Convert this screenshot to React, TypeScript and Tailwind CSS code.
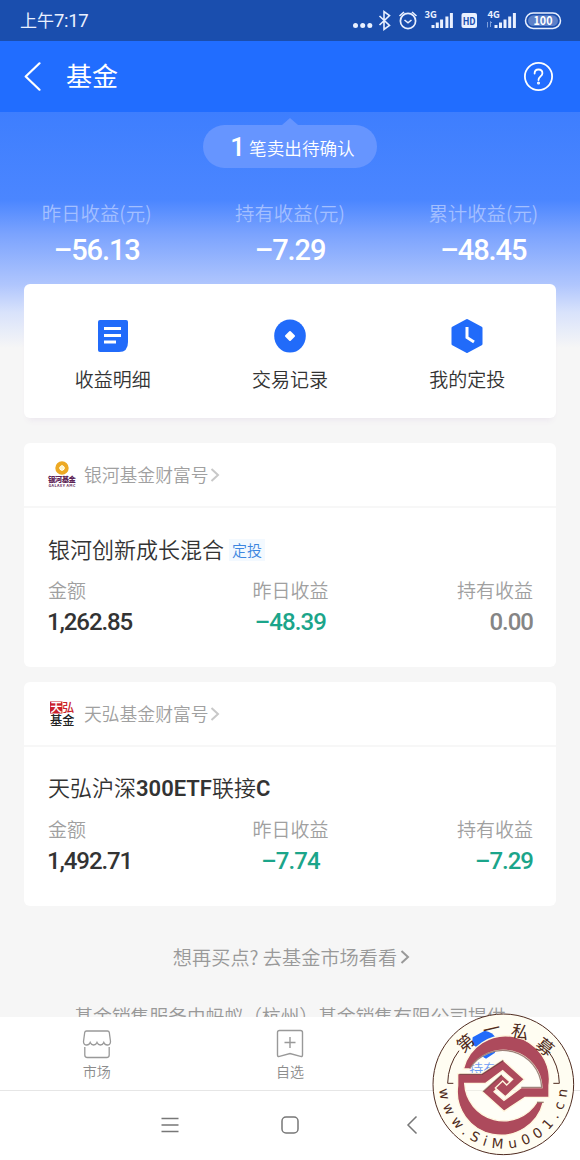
import React from "react";

type Fund = {
  company: string;
  logo: React.ReactNode;
  name: React.ReactNode;
  tag?: string;
  amount: string;
  yesterday: string;
  holding: string;
};

const GalaxyLogo = () => (
  <svg className="overflow-visible" width="28" height="28" viewBox="0 0 28 28">
    <circle cx="14" cy="7" r="4.600" fill="none" stroke="#eda923" strokeWidth="4.200" />
    <path d="M14 4v6M11 7h6" stroke="#fff3c4" strokeWidth="1.600" />
    <text x="0" y="21" textLength="28" fontSize="7.400" fontWeight="900" fill="#5d2456">
      银河基金
    </text>
    <text x="0.500" y="26.300" textLength="27" fontSize="3.800" fontWeight="700" fill="#5d2456">
      GALAXY AMC
    </text>
  </svg>
);

const TianhongLogo = () => (
  <svg className="overflow-visible" width="28" height="28" viewBox="0 0 28 28">
    <rect x="2" y="1.500" width="12.400" height="12" fill="#c91f2c" />
    <text x="2.200" y="12" fontSize="12" fontWeight="500" fill="#fff">
      天
    </text>
    <text x="14.200" y="12" fontSize="12" fontWeight="500" fill="#c91f2c">
      弘
    </text>
    <text x="2" y="25" fontSize="12.200" fontWeight="500" fill="#222">
      基金
    </text>
  </svg>
);

const funds: Fund[] = [
  {
    company: "银河基金财富号",
    logo: <GalaxyLogo />,
    name: "银河创新成长混合",
    tag: "定投",
    amount: "1,262.85",
    yesterday: "–48.39",
    holding: "0.00",
  },
  {
    company: "天弘基金财富号",
    logo: <TianhongLogo />,
    name: (
      <>
        天弘沪深<b className="font-[Roboto] font-semibold">300ETF</b>联接
        <b className="font-[Roboto] font-semibold">C</b>
      </>
    ),
    amount: "1,492.71",
    yesterday: "–7.74",
    holding: "–7.29",
  },
];

const stats = [
  { label: "昨日收益(元)", value: "–56.13" },
  { label: "持有收益(元)", value: "–7.29" },
  { label: "累计收益(元)", value: "–48.45" },
];

const Chevron = ({ color }: { color: string }) => (
  <svg width="10" height="16" viewBox="0 0 10 16" fill="none">
    <path d="M1.500 2L8 8l-6.500 6" stroke={color} strokeWidth="2" />
  </svg>
);

const StatusBar = () => (
  <div className="flex h-[41px] shrink-0 items-center justify-between bg-[#1a4eae] pl-5 text-[17px] text-[#e9f0ff]">
    <span className="mt-[2px]">
      上午<span className="font-[Roboto] text-[18.500px] tracking-[-0.300px]">7:17</span>
    </span>
    <svg width="240" height="41" viewBox="0 0 240 41" fill="none" stroke="#e9f0ff">
      <g fill="#e9f0ff" stroke="none">
        <circle cx="15.500" cy="25.500" r="2.500" />
        <circle cx="22.700" cy="25.500" r="2.500" />
        <circle cx="29.800" cy="25.500" r="2.500" />
      </g>
      <path d="M39.500 16l10 9.500-5.500 4v-18l5.500 4-10 9.500" strokeWidth="1.600" />
      <circle cx="68" cy="21" r="7.600" strokeWidth="1.700" />
      <path d="M64.500 20l3.500 2.800 3.500-2.800M59.500 16l4.500-4M76.500 16l-4.500-4" strokeWidth="1.600" />
      <g fill="#e9f0ff" stroke="none" fontWeight="700" fontSize="9.500">
        <text x="84.500" y="18">3G</text>
        <text x="147.500" y="18">4G</text>
      </g>
      <path
        d="M93 28v-3M97.300 28v-5.500M101.600 28v-8.500M106.900 28v-11.500M111.400 28v-15M156 28v-3M160.500 28v-5.500M165 28v-8.500M169.700 28v-11.500M174.400 28v-15"
        strokeWidth="3"
      />
      <path d="M147.500 22v5.500M150.500 27v-5.500l1.500 1.500" stroke="#7fa0dc" />
      <rect x="121.500" y="13" width="15.500" height="15" rx="2" fill="#e9f0ff" stroke="none" />
      <text x="122.700" y="24.500" fontSize="10" fontWeight="700" textLength="13" lengthAdjust="spacingAndGlyphs" fill="#1a4eae" stroke="none">
        HD
      </text>
      <rect x="185.500" y="13" width="35" height="15.400" rx="7.700" strokeWidth="1.500" />
      <rect x="188" y="15.300" width="30" height="10.800" rx="5.400" fill="#5c80c8" stroke="none" />
      <text x="193.500" y="25" fontSize="12" fontWeight="700" textLength="19" lengthAdjust="spacingAndGlyphs" fill="#fff" stroke="none">
        100
      </text>
    </svg>
  </div>
);

const Header = () => (
  <div className="flex h-[71px] shrink-0 items-center bg-[#216dff] px-6 text-white">
    <svg width="18" height="30" viewBox="0 0 18 30" fill="none">
      <path d="M15.500 1.300L1.700 14.500l13.800 13.200" stroke="#fff" strokeWidth="2.200" strokeLinecap="round" strokeLinejoin="round" />
    </svg>
    <h1 className="-mt-[4px] ml-6 text-[26px] leading-none">基金</h1>
    <svg className="mr-[2px] ml-auto" width="31" height="31" viewBox="0 0 31 31" fill="none" stroke="#fff" strokeWidth="1.800">
      <circle cx="15.500" cy="15.500" r="13.600" />
      <path d="M11.600 12.500c0-2.500 1.700-4 3.900-4s3.900 1.500 3.900 3.700c0 3.200-3.900 3.200-3.900 6.800" strokeLinecap="round" />
      <circle cx="15.500" cy="22" r="0.600" />
    </svg>
  </div>
);

const Summary = () => (
  <div className="flex h-[172px] flex-col items-center pt-[6px] text-white">
    <svg width="16" height="7" viewBox="0 0 16 7">
      <path d="M0 7L8 0l8 7z" fill="#6695ff" />
    </svg>
    <div className="flex h-[43px] w-[174px] items-center justify-center rounded-full bg-[#6695ff] pl-[5px]">
      <span className="font-[Roboto] text-[26px] leading-none font-medium">1</span>
      <span className="mt-[3px] ml-1 text-[17.600px] leading-[26px] font-[350]">笔卖出待确认</span>
    </div>
    <div className="mt-[31px] grid w-full grid-cols-3">
      {stats.map((s) => (
        <div key={s.label} className="flex flex-col items-center">
          <span className="text-[19.400px] leading-[28px] font-[350] text-[#a3bfff]">{s.label}</span>
          <span className="mt-[5px] font-[Roboto] text-[29px] leading-[36px] font-medium tracking-[-1.100px]">
            {s.value}
          </span>
        </div>
      ))}
    </div>
  </div>
);

const Actions = () => (
  <div className="mx-6 grid h-[134px] grid-cols-3 rounded-md bg-white pt-[34px] text-[19px] text-[#333] shadow-[0_6px_6px_-4px_#ebe6ee]">
    <div className="flex flex-col items-center gap-[9px]">
      <svg width="36" height="36" viewBox="0 0 36 36">
        <path d="M5 2h26a2 2 0 0 1 2 2v20q0 10-9 10H5a2 2 0 0 1-2-2V4a2 2 0 0 1 2-2z" fill="#216bfa" />
        <path d="M9 10.500h17M9 17.500h17M9 24h12" stroke="#fff" strokeWidth="2.800" />
      </svg>
      <span className="leading-[32px] font-[350]">收益明细</span>
    </div>
    <div className="flex flex-col items-center gap-[9px]">
      <svg width="36" height="36" viewBox="0 0 36 36">
        <ellipse cx="18" cy="18" rx="15.800" ry="16.500" fill="#216bfa" />
        <path d="M18 14l4 4-4 4-4-4z" fill="#fff" stroke="#fff" strokeWidth="2" strokeLinejoin="round" />
      </svg>
      <span className="leading-[32px] font-[350]">交易记录</span>
    </div>
    <div className="flex flex-col items-center gap-[9px]">
      <svg width="36" height="36" viewBox="0 0 36 36">
        <path d="M18 2.500l14 7.500v16l-14 7.500-14-7.500V10z" fill="#216bfa" stroke="#216bfa" strokeWidth="3" strokeLinejoin="round" />
        <path d="M18 9v10.500l7 4.500" fill="none" stroke="#fff" strokeWidth="3" />
      </svg>
      <span className="leading-[32px] font-[350]">我的定投</span>
    </div>
  </div>
);

const valueColor = (v: string) => (v.startsWith("–") ? "text-[#1ba58a]" : "text-[#858585]");

const FundCard = ({ fund }: { fund: Fund }) => (
  <div className="mx-6 h-[224px] rounded-md bg-white">
    <div className="flex h-[65px] items-center border-b-2 border-[#f7f7f7] px-6">
      {fund.logo}
      <span className="ml-[8px] text-[17.800px] font-[350] text-[#a0a0a0]">{fund.company}</span>
      <span className="ml-[2px]">
        <Chevron color="#c8c8c8" />
      </span>
    </div>
    <div className="px-6 pt-[24px]">
      <div className="flex h-[32px] items-center text-[22px] leading-[32px] text-[#333]">
        <span className="font-[350]">{fund.name}</span>
        {fund.tag && (
          <span className="mt-[3px] ml-[5px] bg-[#f3f9ff] px-[3px] text-[15px] leading-[22px] font-[350] text-[#3d86e0]">
            {fund.tag}
          </span>
        )}
      </div>
      <div className="mt-[12px] flex justify-between text-[19px] leading-[28px] font-[350] text-[#a0a0a0]">
        <div className="w-[128px]">
          <div>金额</div>
          <div className="mt-[2px] -ml-px font-[Roboto] text-[24px] leading-[32px] font-medium tracking-[-1.100px] text-[#333]">
            {fund.amount}
          </div>
        </div>
        <div className="text-center">
          <div>昨日收益</div>
          <div className={`mt-[2px] font-[Roboto] text-[24px] leading-[32px] font-medium tracking-[-0.900px] ${valueColor(fund.yesterday)}`}>
            {fund.yesterday}
          </div>
        </div>
        <div className="-mr-px w-[128px] text-right">
          <div>持有收益</div>
          <div className={`mt-[2px] font-[Roboto] text-[24px] leading-[32px] font-medium tracking-[-1px] ${valueColor(fund.holding)}`}>
            {fund.holding}
          </div>
        </div>
      </div>
    </div>
  </div>
);

const TabBar = () => (
  <div className="grid h-[73px] shrink-0 grid-cols-3 bg-white text-[14px] font-[350] text-[#8c8c8c]">
    <div className="flex flex-col items-center pt-[12px]">
      <svg width="30" height="30" viewBox="0 0 30 30" fill="none" stroke="#999" strokeWidth="1.300">
        <path d="M4.500 2h21q1.500 0 1.800 1.500l1.200 9q0 3.500-3.200 3.500-2.500 0-3.500-2.500-1 2.500-3.400 2.500-2.300 0-3.400-2.500-1 2.500-3.400 2.500-2.300 0-3.400-2.500-1 2.500-3.500 2.500-3.200 0-3.200-3.500l1.200-9Q3 2 4.500 2z" />
        <path d="M2.800 18v8q0 2.500 2.500 2.500h19.400q2.500 0 2.500-2.500v-8" />
      </svg>
      <span className="mt-[2px] leading-[20px]">市场</span>
    </div>
    <div className="flex flex-col items-center pt-[12px]">
      <svg width="30" height="30" viewBox="0 0 30 30" fill="none" stroke="#999" strokeWidth="1.400">
        <path d="M4.500 1.500h21q2 0 2 2v22.500q0 2-2 1.400L15 24.500l-10.500 2.900q-2 .6-2-1.400V3.500q0-2 2-2z" />
        <path d="M15 8v11M9.500 13.500h11" />
      </svg>
      <span className="mt-[2px] leading-[20px]">自选</span>
    </div>
    <div className="flex flex-col items-center pt-[12px] text-[#216bfa]">
      <svg width="30" height="30" viewBox="0 0 30 30">
        <path d="M3.500 8L16 1q8 1 11 7l-1 6-16 5-6.500-4z" fill="#216bfa" />
        <path d="M12 26l15-6-1.500 3.500L17 29z" fill="#216bfa" />
      </svg>
      <span className="mt-[-1px] leading-[20px]">持有</span>
    </div>
  </div>
);

const SystemNav = () => (
  <div className="flex h-[70px] shrink-0 items-center justify-center gap-[101px] border-t border-[#e6e6e6] bg-white pb-[2px] pl-[2px]">
    <svg width="20" height="20" viewBox="0 0 20 20" stroke="#777" strokeWidth="1.500">
      <path d="M1.500 3.500h17M1.500 10h17M1.500 16.500h17" />
    </svg>
    <svg width="20" height="20" viewBox="0 0 20 20" fill="none" stroke="#777" strokeWidth="1.500">
      <rect x="1" y="2" width="16" height="16" rx="4" />
    </svg>
    <svg width="20" height="20" viewBox="0 0 20 20" fill="none" stroke="#777" strokeWidth="1.500">
      <path d="M14.500 1.500L6 10l8.500 8.500" />
    </svg>
  </div>
);

// round seal that floats over the bottom right corner
const Seal = () => (
  <svg className="absolute right-0 bottom-0" width="160" height="160" viewBox="0 0 480 480">
    <defs>
      <path id="seal-bottom" d="M72 253a178 178 0 0 0 356 0" />
    </defs>
    {/* the middle stays see-through so the tab below shows */}
    <path
      fillRule="evenodd"
      d="M250 42a211 211 0 1 0 0 422 211 211 0 0 0 0-422zM250 139a117 117 0 1 1 0 234 117 117 0 0 1 0-234z"
      fill="#fffdf2"
    />
    <circle cx="250" cy="256" r="117" fill="#fffbe8" opacity="0.350" />
    <path d="M158 112l36-20q24 4 34 22l-3 18-48 14-21-13z" fill="#216bfa" />
    <path d="M183 166l45-17-4 10-26 17z" fill="#216bfa" />
    <circle cx="250" cy="253" r="211" fill="none" stroke="#4f2b20" strokeWidth="3" />
    <path d="M100 250H83a167 167 0 0 1 34-98M384 152a167 167 0 0 1 34 98h-18" fill="none" stroke="#4f2b20" strokeWidth="3" />
    <g stroke="#fff7df" strokeWidth="4" fill="#ad4a5c">
      <path
        id="hook"
        d="M130 207A131 131 0 0 1 387 256V292H315L252 334 187 275 244 223 274 249 252 270 240 258 222 275 252 301 303 263H366A117 117 0 0 0 149 207z"
      />
      <use href="#hook" transform="rotate(180 250 256.500)" />
    </g>
    <g fill="none" stroke="#54272a" strokeWidth="4" opacity="0.550">
      <path d="M149 206A117 117 0 0 1 365 262H304" />
      <path d="M118 223h68l64-42" />
      <path d="M189 275l56-50" />
      <path d="M351 307h20" />
    </g>
    <g fill="#4f2b20" fontSize="52" textAnchor="middle">
      <text transform="translate(137 130) rotate(-40)" y="18">第</text>
      <text transform="translate(215 88) rotate(-13)" y="18">一</text>
      <text transform="translate(300 96) rotate(13)" y="18">私</text>
      <text transform="translate(374 142) rotate(39)" y="18">募</text>
    </g>
    <text fill="#4f2b20" fontSize="41" className="font-[DejaVu_Sans]" dominantBaseline="central">
      <textPath href="#seal-bottom" startOffset="12" textLength="534">
        www.SiMu001.cn
      </textPath>
    </text>
  </svg>
);

const App = () => {
  return (
    <div className="relative flex h-[1160px] w-[580px] flex-col overflow-hidden bg-[#f6f6f6] font-['Noto_Sans_CJK_SC',sans-serif]">
      <StatusBar />
      <Header />
      <div className="min-h-0 flex-1 overflow-hidden bg-[linear-gradient(#3e7efe_0px,#4b86ff_88px,#7ba3fe_122px,#b0c6fd_173px,#d8e2fb_200px,#f6f6f6_236px)]">
        <Summary />
        <Actions />
        <div className="mt-[25px] flex flex-col gap-[15px]">
          {funds.map((fund) => (
            <FundCard key={fund.company} fund={fund} />
          ))}
        </div>
        <div className="mt-[36px] flex items-center justify-center gap-[3px] pl-[3px] text-[19.200px] leading-[30px] font-[350] text-[#999]">
          <span>想再买点? 去基金市场看看</span>
          <Chevron color="#999" />
        </div>
        <p className="mt-[30px] text-center text-[19px] leading-[28px] font-[350] tracking-[-0.250px] whitespace-nowrap text-[#999]">
          基金销售服务由蚂蚁（杭州）基金销售有限公司提供
        </p>
      </div>
      <TabBar />
      <SystemNav />
      <Seal />
    </div>
  );
};

export default App;
